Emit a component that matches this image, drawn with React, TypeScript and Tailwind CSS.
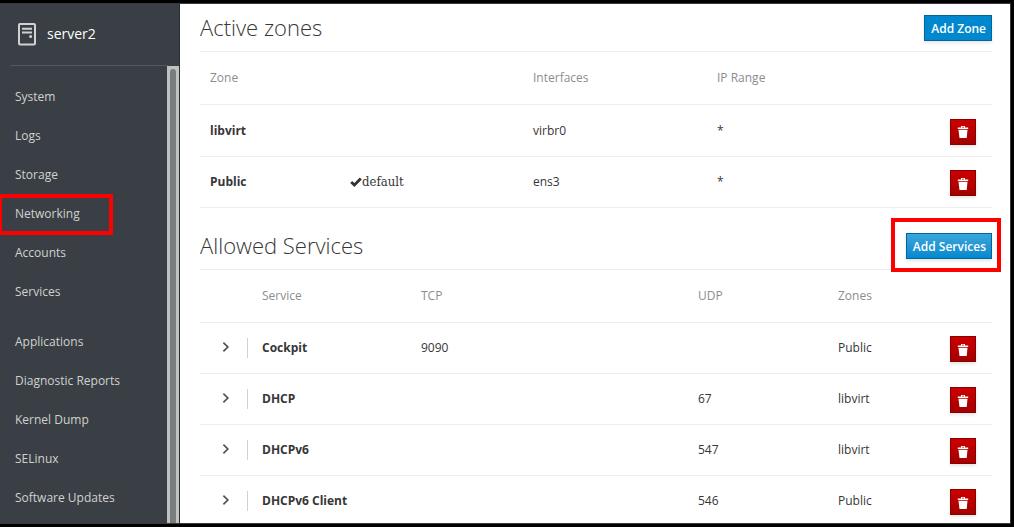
import type { ReactNode } from 'react';

const mainLinks = ['System', 'Logs', 'Storage', 'Networking', 'Accounts', 'Services'];
const toolLinks = ['Applications', 'Diagnostic Reports', 'Kernel Dump', 'SELinux', 'Software Updates'];

const zones = [
  { name: 'libvirt', isDefault: false, interfaces: 'virbr0', range: '*' },
  { name: 'Public', isDefault: true, interfaces: 'ens3', range: '*' },
];

const services = [
  { name: 'Cockpit', tcp: '9090', udp: '', zone: 'Public' },
  { name: 'DHCP', tcp: '', udp: '67', zone: 'libvirt' },
  { name: 'DHCPv6', tcp: '', udp: '547', zone: 'libvirt' },
  { name: 'DHCPv6 Client', tcp: '', udp: '546', zone: 'Public' },
];

const tableClass =
  'w-full table-fixed border-separate border-spacing-0 [&_td]:border-b [&_td]:border-[#ededed] [&_th]:border-b [&_th]:border-[#ededed]';

function ServerIcon() {
  return (
    <svg width="18" height="24" viewBox="0 0 18 24" fill="none" aria-hidden="true">
      <rect x="1" y="2" width="16" height="20.6" rx="1" stroke="#d1d1d1" strokeWidth="2" />
      <path d="M4 6.7h10M4 10.4h10" stroke="#d1d1d1" strokeWidth="2" />
      <circle cx="12.6" cy="14.4" r="1.5" fill="#d1d1d1" />
    </svg>
  );
}

function TrashIcon() {
  return (
    <svg width="12" height="13" viewBox="0 0 12 13" fill="#fff" aria-hidden="true">
      <path d="M4 0h4v1.4h3.2v1.5H.8V1.4H4zM5 .8v.6h2V.8z" fillRule="evenodd" />
      <path d="M1.5 3.7h9L9.7 12H2.5z" />
    </svg>
  );
}

function CheckIcon() {
  return (
    <svg width="12" height="10" viewBox="0 0 12 10" fill="none" aria-hidden="true">
      <path d="M1.2 5 4.4 8 10.8 1.6" stroke="#333" strokeWidth="2.8" />
    </svg>
  );
}

function NavList({ items }: { items: string[] }) {
  return (
    <ul>
      {items.map((item) => (
        <li key={item} className="relative">
          <a href={`#${item}`} className="flex h-[39px] items-center pb-0.5 pl-[15px] text-[12px] text-[#d1d1d1]">
            {item}
          </a>
          {item === 'Networking' && (
            <span className="pointer-events-none absolute -left-0.5 -top-px h-[41px] w-[115px] border-4 border-[#ff0000]" />
          )}
        </li>
      ))}
    </ul>
  );
}

function DeleteButton({ label }: { label: string }) {
  return (
    <button
      type="button"
      aria-label={`Delete ${label}`}
      className="flex size-[26px] items-center justify-center border border-[#8b0000] bg-linear-to-b from-[#cc0000] to-[#a30000] pt-0.5 shadow-[0_2px_3px_rgba(3,3,3,0.1)]"
    >
      <TrashIcon />
    </button>
  );
}

function SectionHeader({ title, action }: { title: string; action: ReactNode }) {
  return (
    <header className="flex items-end justify-between border-b border-[#ededed] pb-2.5">
      <h2 className="pb-0.5 text-[22px] leading-6 font-light text-[#363636]">{title}</h2>
      {action}
    </header>
  );
}

function Th({ children }: { children?: ReactNode }) {
  return <th className="pl-2.5 text-left font-normal">{children}</th>;
}

export default function App() {
  return (
    <div className="h-screen bg-black py-[3px] pr-[3px] font-['Open_Sans','Noto_Sans',sans-serif] text-[12px] text-[#363636]">
      <div className="flex h-full overflow-hidden border-y border-r border-[#3a3a3a] bg-white">
        <aside className="flex w-[180px] shrink-0 flex-col border-r border-[#292e34] bg-[#393f44]">
          <div className="flex h-[61px] shrink-0 items-center gap-[11px] pb-0.5 pl-[18px] text-[14px] text-white">
            <ServerIcon />
            <span>server2</span>
          </div>
          <div className="mr-[11px] ml-2.5 h-px shrink-0 bg-[#53585c]" />
          <div className="flex min-h-0 flex-1">
            <nav className="flex min-w-0 flex-1 flex-col gap-[11px] overflow-y-auto pt-3 [scrollbar-width:none]">
              <NavList items={mainLinks} />
              <NavList items={toolLinks} />
            </nav>
            <div className="w-3 shrink-0 bg-[#bec2c0] px-[3px] pt-[3px]">
              <div className="h-full rounded-t-full bg-[#797d7d]" />
            </div>
          </div>
        </aside>

        <main className="min-w-0 flex-1 overflow-y-auto pr-[18px] pl-5 [scrollbar-width:none]">
          <section className="pt-[11px]">
            <SectionHeader
              title="Active zones"
              action={
                <button
                  type="button"
                  className="h-[26px] border border-[#00659c] bg-[#0088ce] pt-px pr-[5px] pl-1.5 font-semibold text-white shadow-[0_2px_3px_rgba(3,3,3,0.1)]"
                >
                  Add Zone
                </button>
              }
            />
            <table className={tableClass}>
              <colgroup>
                <col className="w-[140px]" />
                <col className="w-[183px]" />
                <col className="w-[184px]" />
                <col className="w-[233px]" />
                <col className="w-[52px]" />
              </colgroup>
              <thead>
                <tr className="h-[53px] text-[#8b8d8f]">
                  <Th>Zone</Th>
                  <Th />
                  <Th>Interfaces</Th>
                  <Th>IP Range</Th>
                  <Th />
                </tr>
              </thead>
              <tbody>
                {zones.map((zone) => (
                  <tr key={zone.name} className="h-[51px] first:h-[52px]">
                    <th scope="row" className="pl-2.5 text-left font-bold">{zone.name}</th>
                    <td className="pl-2.5">
                      {zone.isDefault && (
                        <span className="flex items-center font-['DejaVu_Serif_Condensed','DejaVu_Serif',serif] text-[13px]">
                          <CheckIcon />
                          default
                        </span>
                      )}
                    </td>
                    <td className="pl-2.5">{zone.interfaces}</td>
                    <td className="pl-2.5">{zone.range}</td>
                    <td className="pt-0.5 pl-2.5">
                      <DeleteButton label={zone.name} />
                    </td>
                  </tr>
                ))}
              </tbody>
            </table>
          </section>

          <section className="pt-[25px]">
            <SectionHeader
              title="Allowed Services"
              action={
                <div className="relative">
                  <button
                    type="button"
                    className="block h-[26px] border border-[#00659c] bg-linear-to-b from-[#39a5dc] to-[#0088ce] pt-px pr-[5px] pl-1.5 font-semibold text-white shadow-[0_2px_3px_rgba(3,3,3,0.1)]"
                  >
                    Add Services
                  </button>
                  <span className="pointer-events-none absolute -top-[15px] -right-[9px] -bottom-[13px] -left-[15px] border-4 border-[#ff0000]" />
                </div>
              }
            />
            <table className={tableClass}>
              <colgroup>
                <col className="w-[52px]" />
                <col className="w-[159px]" />
                <col className="w-[277px]" />
                <col className="w-[140px]" />
                <col className="w-[112px]" />
                <col className="w-[52px]" />
              </colgroup>
              <thead>
                <tr className="h-[53px] text-[#8b8d8f]">
                  <Th />
                  <Th>Service</Th>
                  <Th>TCP</Th>
                  <Th>UDP</Th>
                  <Th>Zones</Th>
                  <Th />
                </tr>
              </thead>
              <tbody>
                {services.map((service) => (
                  <tr key={service.name} className="h-[51px]">
                    <td>
                      <button
                        type="button"
                        aria-label={`Show details of ${service.name}`}
                        className="flex h-5 w-12 items-center justify-center border-r border-[#d1d1d1] pb-0.5 pl-1"
                      >
                        <svg width="8" height="10" viewBox="0 0 8 10" fill="none" aria-hidden="true">
                          <path d="m1.4.7 4.4 4.3-4.4 4.3" stroke="#4d5258" strokeWidth="1.7" />
                        </svg>
                      </button>
                    </td>
                    <th scope="row" className="pl-2.5 text-left font-bold">{service.name}</th>
                    <td className="pl-2.5">{service.tcp}</td>
                    <td className="pl-2.5">{service.udp}</td>
                    <td className="pl-2.5">{service.zone}</td>
                    <td className="pt-0.5 pl-2.5">
                      <DeleteButton label={service.name} />
                    </td>
                  </tr>
                ))}
              </tbody>
            </table>
          </section>
        </main>
      </div>
    </div>
  );
}
